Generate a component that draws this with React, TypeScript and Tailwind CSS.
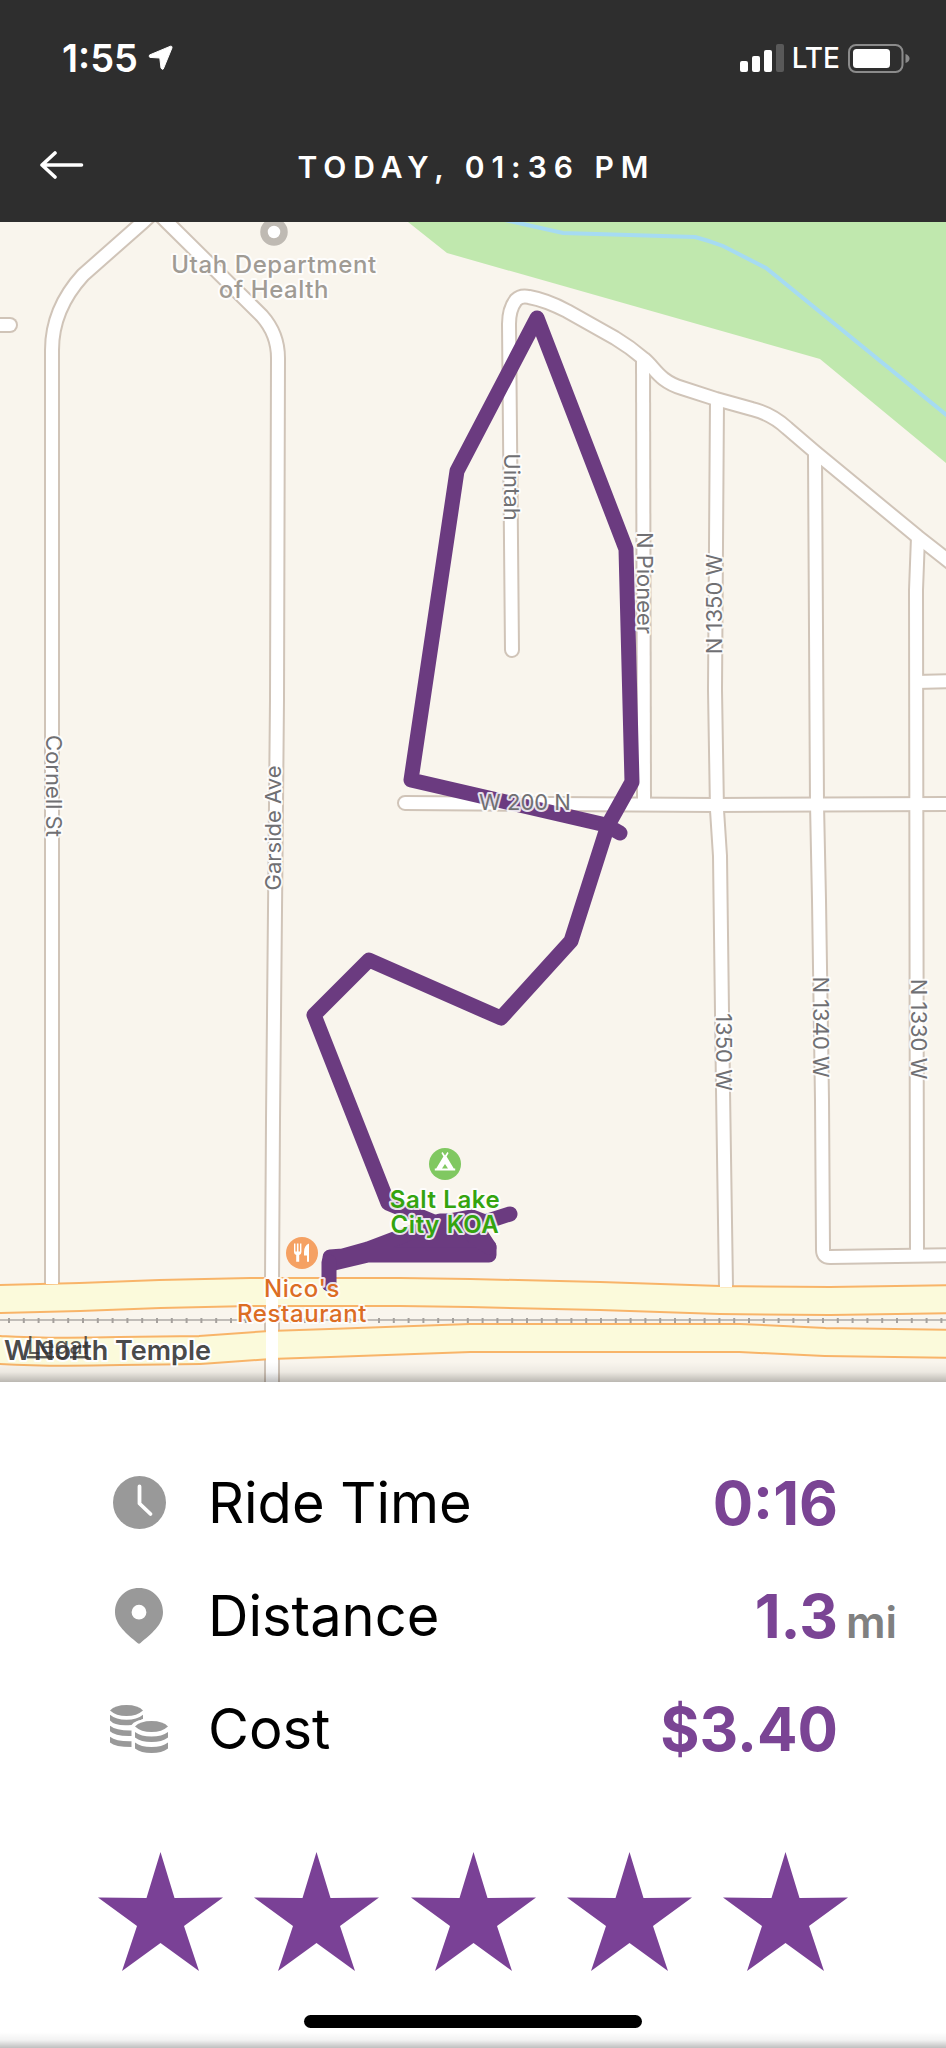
import type { ReactNode } from 'react';

type Street = { name: string; d: string; cap?: 'round' | 'butt' };

const streets: Street[] = [
  { name: 'stub-west', d: 'M-10 325 H10', cap: 'round' },
  { name: 'cornell', d: 'M155 211 L143 222 L83 275 Q52 309 52 350 L52 1284' },
  { name: 'garside', d: 'M145 200 L167 222 L262 316 Q278 334 278 358 L277 700 L273 1120 L272 1282' },
  { name: 'garside-south', d: 'M272 1282 V1400' },
  {
    name: 'uintah',
    d: 'M512 650 L509 324 Q509 309 516 300 Q521 295 529 297 Q546 300 567 311 L615 338 Q630 347 644 359 C655 368 659 381 682 388 L716 399 L752 409 Q772 414 787 428 L815 452 L918 537 L960 570',
    cap: 'round',
  },
  { name: 'pioneer', d: 'M643 359 L644 804' },
  { name: '1350w', d: 'M717 400 L715 690 L717 810 L720 856 L723 1090 L726 1287' },
  { name: '1340w', d: 'M815 454 L817 804 L819 900 L822 1100 L823 1250 Q823 1257 830 1257 L960 1255' },
  { name: '1330w', d: 'M918 537 L916 590 L917 1256' },
  { name: 'stub-east', d: 'M916 682 L960 681' },
  { name: 'w200n', d: 'M405 803 L716 805 L960 804', cap: 'round' },
];

const arterials = [
  'M-10 1300 L0 1299 L80 1297 L160 1294 L250 1292 L400 1292 L470 1293 L600 1296 L720 1300 L830 1301 L960 1299',
  'M-10 1349 L0 1350 Q50 1353 120 1351 L200 1350 L270 1345 L330 1343 L470 1338 L740 1338 L825 1342 L960 1344',
];

const streetLabels = [
  { text: 'Cornell St', x: 46, y: 786, turn: 90 },
  { text: 'Garside Ave', x: 281, y: 828, turn: -90 },
  { text: 'Uintah', x: 504, y: 487, turn: 90 },
  { text: 'N Pioneer', x: 637, y: 583, turn: 90 },
  { text: 'N 1350 W', x: 722, y: 604, turn: -90 },
  { text: 'W 200 N', x: 525, y: 810, turn: 0 },
  { text: '1350 W', x: 716, y: 1052, turn: 90 },
  { text: 'N 1340 W', x: 813, y: 1027, turn: 90 },
  { text: 'N 1330 W', x: 911, y: 1029, turn: 90 },
];

const sleepers = Array.from({ length: 65 }, (_, i) => 9 + i * 14.8);

function PlaceLabel({ x, y, lines, className }: { x: number; y: number; lines: string[]; className: string }) {
  return (
    <text textAnchor="middle" paintOrder="stroke" stroke="#fff" strokeOpacity="0.85" strokeWidth="4" strokeLinejoin="round" className={className}>
      {lines.map((line, i) => (
        <tspan key={line} x={x} y={y + i * 25}>
          {line}
        </tspan>
      ))}
    </text>
  );
}

function RideMap() {
  return (
    <svg viewBox="0 222 946 1160" className="block w-full bg-[#f9f5ed]" role="group" aria-label="Map of the ride">
      <path d="M408 222 L447 253 L820 359 L946 463 V222 Z" fill="#c0e8ae" />
      <path d="M505 220 L563 233 L695 237 Q710 241 723 246 L766 268 L960 426" fill="none" stroke="#a6dbf2" strokeWidth="4" />

      <g fill="none" stroke="#d0c4b8" strokeWidth="16" strokeLinejoin="round">
        {streets.map((s) => (
          <path key={s.name} d={s.d} strokeLinecap={s.cap ?? 'butt'} />
        ))}
      </g>
      <g fill="none" stroke="#f8b469" strokeWidth="30">
        {arterials.map((d) => (
          <path key={d} d={d} />
        ))}
      </g>
      <g fill="none" stroke="#fbfadb" strokeWidth="26">
        {arterials.map((d) => (
          <path key={d} d={d} />
        ))}
      </g>
      <path d="M0 1320 H946" stroke="#aeaaa6" strokeWidth="1.4" />
      <g stroke="#a5a19d" strokeWidth="2">
        {sleepers.map((x) => (
          <path key={x} d={`M${x} 1318 v5`} />
        ))}
      </g>
      <g fill="none" stroke="#fff" strokeWidth="12" strokeLinejoin="round">
        {streets.map((s) => (
          <path key={s.name} d={s.d} strokeLinecap={s.cap ?? 'butt'} />
        ))}
      </g>

      <g stroke="#6b3b80" strokeWidth="15" strokeLinejoin="round" strokeLinecap="round" fill="none">
        <path d="M620 833 L606 825 L411 780 L457 471 L537 318 L626 549 L632 782 L608 825 L571 941 L501 1018 L369 960 L314 1015 L388 1203 L412 1213 L436 1223 L450 1221 L472 1217 L485 1222 L510 1214" />
        <path d="M330 1257 L343 1256 L368 1249 L397 1238 L440 1221 L472 1221 L489 1247 L489 1255 L368 1255 L330 1264 Z" fill="#6b3b80" />
        <path d="M472 1235 L489 1247" />
        <path d="M329 1262 V1284" />
      </g>

      <circle cx="274" cy="232" r="10" fill="#fff" stroke="#bfbab3" strokeWidth="7.5" />
      <circle cx="445" cy="1164" r="16" fill="#80c861" />
      <path d="M442.600 1152 L445 1155.500 L447.400 1152 L448.600 1153 L446.600 1156.600 L453.800 1168.500 H455.200 V1170.500 H434.800 V1168.500 H436.200 L443.400 1156.600 L441.400 1153 Z M445 1164 L442 1168.500 H448 Z" fill="#fff" fillRule="evenodd" />
      <circle cx="302" cy="1253" r="16" fill="#f5a163" />
      <path d="M294 1243.500 h1.400 v8 h1.500 v-8 h1.600 v8 h1.500 v-8 h1.400 v8.500 q0 2.400 -2.200 3 v6.800 h-3 v-6.800 q-2.200 -.6 -2.200 -3 Z M309 1243.500 v18.300 h-2 v-6.300 h-3 v-3.500 q0 -6.500 5 -8.500 Z" fill="#fff" />

      <g className="font-[Inter,sans-serif] text-[22px]" fill="#707073" paintOrder="stroke" stroke="#fff" strokeOpacity="0.85" strokeWidth="4" strokeLinejoin="round" textAnchor="middle">
        {streetLabels.map((l) => (
          <text key={l.text} transform={`translate(${l.x} ${l.y}) rotate(${l.turn})`}>
            {l.text}
          </text>
        ))}
      </g>
      <PlaceLabel x={274} y={273} lines={['Utah Department', 'of Health']} className="fill-[#a09b94] text-2xl font-medium tracking-wide" />
      <PlaceLabel x={445} y={1208} lines={['Salt Lake', 'City KOA']} className="fill-[#34a40e] text-2xl font-semibold tracking-wide" />
      <PlaceLabel x={302} y={1297} lines={["Nico's", 'Restaurant']} className="fill-[#dc6d24] text-2xl font-medium tracking-wide" />
      <g className="fill-[#4a4a4a] text-[27px] font-semibold" paintOrder="stroke" stroke="#fff" strokeWidth="4" strokeLinejoin="round">
        <text x="4" y="1360">W</text>
        <text x="34" y="1360">North Temple</text>
      </g>
      <a href="#legal">
        <text x="27" y="1354" className="fill-[#333333]/80 text-2xl underline">
          Legal
        </text>
      </a>
    </svg>
  );
}

function ClockIcon() {
  return (
    <svg viewBox="0 0 53 53" className="size-[53px]" aria-hidden="true">
      <circle cx="26.500" cy="26.500" r="26.500" fill="#999" />
      <path d="M26.500 10.500 V27.500 L37.500 38" fill="none" stroke="#fff" strokeWidth="3.800" strokeLinecap="round" strokeLinejoin="round" />
    </svg>
  );
}

function PinIcon() {
  return (
    <svg viewBox="0 0 48 56" className="h-14 w-12" aria-hidden="true">
      <path d="M24 0 C10.500 0 0 10.500 0 24 C0 37 12 46 22.500 55 Q24 56.300 25.500 55 C36 46 48 37 48 24 C48 10.500 37.500 0 24 0 Z M24 16.800 a7.400 7.400 0 1 1 0 14.800 a7.400 7.400 0 1 1 0 -14.800 Z" fill="#999" fillRule="evenodd" />
    </svg>
  );
}

function CoinsIcon() {
  return (
    <svg viewBox="0 0 58 48" className="h-12 w-[58px]" aria-hidden="true">
      <g fill="#999">
        <path d="M0 5.500 Q5 0 16.500 0 T33 5.500 Q27 11 16.500 11 T0 5.500 Z" />
        <path d="M0 9.700 Q6 14.800 16.500 14.800 T33 9.700 V14 Q30 15.400 27 16 Q23 17.500 21.500 20 Q5 21.500 0 15.600 Z" />
        <path d="M0 20.700 Q6 25.700 21.500 25.500 V31 Q5 31.500 0 26.300 Z" />
        <path d="M0 31.700 Q6 36.500 21.500 36.200 V42 Q5 42 0 37.500 Z" />
        <path d="M22 21.500 Q28 13 41.500 13 T60 20 L60 28 H22 Z" fill="#fff" />
        <path d="M25 21.500 Q30 16 41.500 16 T58 21.500 Q52 27 41.500 27 T25 21.500 Z" />
        <path d="M25 27 Q31 31.500 41.500 31.500 T58 27 V32.500 Q52 37 41.500 37 T25 32.500 Z" />
        <path d="M25 37.500 Q31 42 41.500 42 T58 37.500 V43.500 Q52 48 41.500 48 T25 43.500 Z" />
      </g>
    </svg>
  );
}

function Stat({ icon, label, value, unit }: { icon: ReactNode; label: string; value: string; unit?: string }) {
  return (
    <div className="flex h-[113px] items-center">
      <div className="flex w-[58px] shrink-0 justify-center">{icon}</div>
      <dt className="ml-10 flex-1 text-[56px] leading-none text-black">{label}</dt>
      <dd className="flex items-baseline text-[60px] leading-none font-bold text-[#7a4494]">
        {value}
        <span className="w-[66px] pl-2 text-[44px] leading-none font-semibold text-[#808080]">{unit}</span>
      </dd>
    </div>
  );
}

function StatusBar() {
  return (
    <div className="flex h-[116px] items-center justify-between pr-9 pl-[62px]">
      <div className="flex items-center gap-2.5">
        <span className="text-[38px] leading-none font-semibold">1:55</span>
        <svg viewBox="0 0 25 26" className="h-[26px] w-[25px]" aria-hidden="true">
          <path d="M22.500 1.200 L1.500 10 Q.6 12 2 12.400 L11.800 13 L13 23 Q14 25 15.300 24 L24 2.800 Q24.200 .8 22.500 1.200 Z" fill="#fff" stroke="#fff" strokeWidth="1" strokeLinejoin="round" />
        </svg>
      </div>
      <div className="flex items-center gap-2">
        <svg viewBox="0 0 44 28" className="h-7 w-11" aria-label="Signal strength" role="img">
          <rect x="0" y="17" width="8" height="11" rx="2" fill="#fff" />
          <rect x="12" y="12" width="8" height="16" rx="2" fill="#fff" />
          <rect x="24" y="6" width="8" height="22" rx="2" fill="#fff" />
          <rect x="36" y="0" width="8" height="28" rx="2" fill="#595959" />
        </svg>
        <span className="text-[28px] leading-none font-medium">LTE</span>
        <svg viewBox="0 0 62 29" className="h-[29px] w-[62px]" aria-label="Battery" role="img">
          <rect x="1" y="1" width="53.500" height="27" rx="7" fill="none" stroke="#8b8b8b" strokeWidth="2" />
          <rect x="5" y="5" width="37" height="19" rx="3.500" fill="#fff" />
          <path d="M57.500 10 Q61.500 11.500 61.500 14.500 T57.500 19 Z" fill="#8b8b8b" />
        </svg>
      </div>
    </div>
  );
}

const stars = [1, 2, 3, 4, 5];

export default function App() {
  return (
    <div className="min-h-screen bg-white font-[Inter,'Liberation_Sans',sans-serif]">
      <header className="bg-[#2e2e2e] text-white">
        <StatusBar />
        <div className="grid h-[106px] grid-cols-[1fr_auto_1fr] items-start px-10 pt-[35px]">
          <button type="button" aria-label="Back" className="w-11">
            <svg viewBox="0 0 44 28" className="h-7 w-11" aria-hidden="true">
              <path d="M41.500 14 H2 M15 2 L2 14 L15 26" fill="none" stroke="#fff" strokeWidth="3.600" strokeLinecap="round" strokeLinejoin="round" />
            </svg>
          </button>
          <h1 className="pl-[7px] text-[30px] leading-[32px] font-semibold tracking-[7px]">TODAY, 01:36 PM</h1>
        </div>
      </header>

      <main>
        <section className="relative">
          <RideMap />
          <div className="pointer-events-none absolute inset-x-0 bottom-0 h-5 bg-linear-to-t from-black/25 via-black/5 to-transparent" />
        </section>

        <section className="relative flex flex-col pt-16">
          <dl className="pr-[42px] pl-[110px]">
            <Stat icon={<ClockIcon />} label="Ride Time" value="0:16" />
            <Stat icon={<PinIcon />} label="Distance" value="1.3" unit="mi" />
            <Stat icon={<CoinsIcon />} label="Cost" value="$3.40" />
          </dl>
          <div className="mt-[67px] flex justify-between px-[98px]" role="group" aria-label="Rating">
            {stars.map((n) => (
              <button key={n} type="button" aria-label={`Rate ${n} of 5`}>
                <svg viewBox="0 0 125 119" className="block h-[119px] w-[125px]" aria-hidden="true">
                  <path d="M62.500 0 L76.500 46 L125 45.500 L86 74 L101 119 L62.500 91 L24 119 L39 74 L0 45.500 L48.500 46 Z" fill="#7a4196" />
                </svg>
              </button>
            ))}
          </div>
          <div className="mx-auto mt-11 mb-5 h-[13px] w-[338px] rounded-full bg-black" />
          <div className="pointer-events-none absolute inset-x-0 bottom-0 h-4 bg-linear-to-t from-black/25 via-black/5 to-transparent" />
        </section>
      </main>
    </div>
  );
}
